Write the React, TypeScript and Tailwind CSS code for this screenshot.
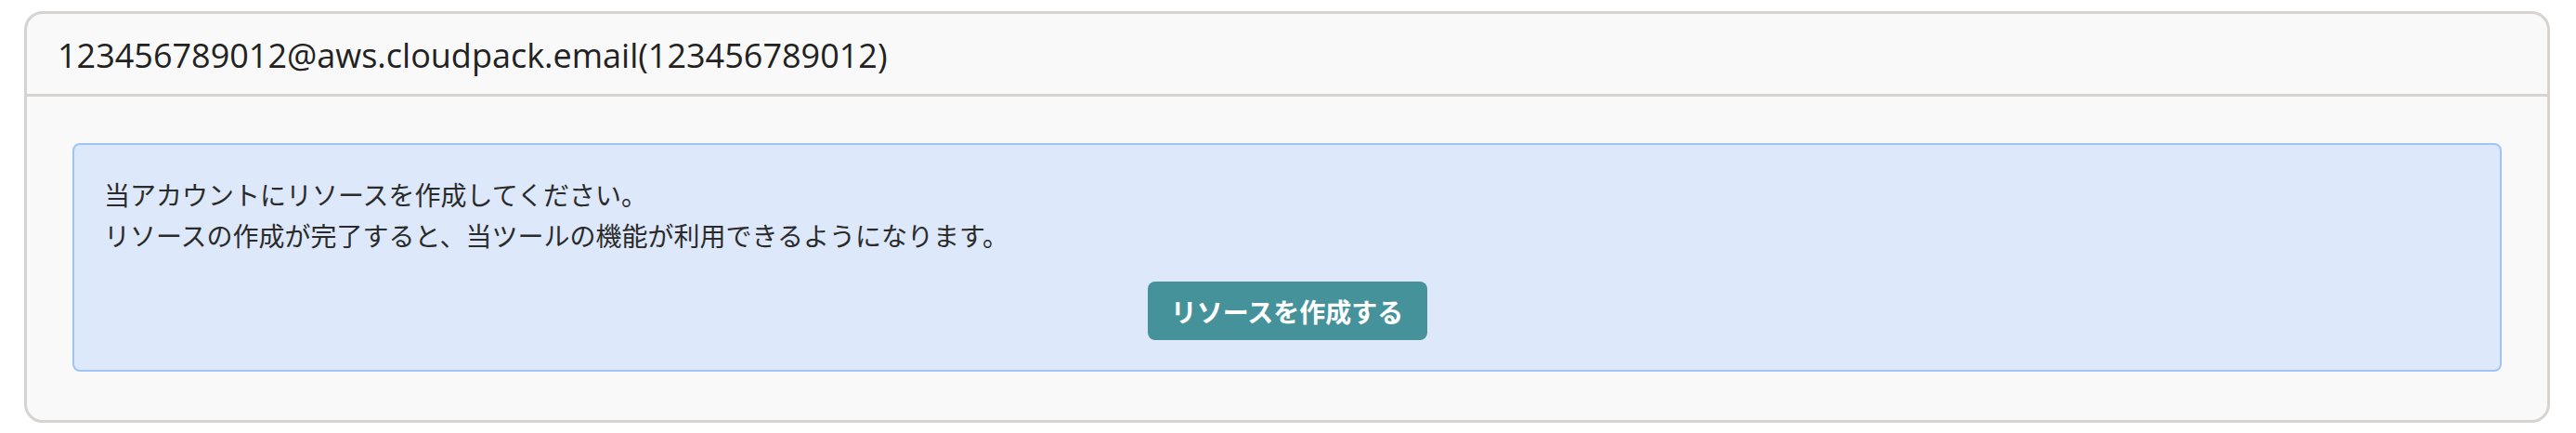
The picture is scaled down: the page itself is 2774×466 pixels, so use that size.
import React from "react";

export default function App() {
  return (
    <div
      className="w-[2774px] h-[466px] bg-white pt-[12px] pl-[26px]"
      style={{ fontFamily: "'Open Sans','Noto Sans CJK JP',sans-serif" }}
    >
      <div className="w-[2720px] h-[443px] rounded-[20px] border-[3px] border-[#d6d3d0] bg-[#f9f9f9] overflow-hidden flex flex-col">
        <div className="h-[89px] px-[33px] py-[20px] border-b-[3px] border-[#d6d3d0]">
          <div className="text-[36px] leading-[49px] text-[#222]">
            123456789012@aws.cloudpack.email(123456789012)
          </div>
        </div>
        <div className="px-[49px] pt-[50px]">
          <div className="h-[246px] rounded-[8px] border-2 border-[#9ec5f5] bg-[#dde8fa] px-[32px] pt-[31px]">
            <div
              className="text-[28px] leading-[44px] text-[#2b2b2b]"
              style={{ fontFamily: "'Noto Sans CJK JP',sans-serif" }}
            >
              <p>当アカウントにリソースを作成してください。</p>
              <p>リソースの作成が完了すると、当ツールの機能が利用できるようになります。</p>
            </div>
            <div className="flex justify-center mt-[28px]">
              <button
                className="h-[63px] w-[301px] rounded-[8px] bg-[#45929a] text-white text-[28px] font-bold flex items-center justify-center"
                style={{ fontFamily: "'Noto Sans CJK JP',sans-serif" }}
              >
                リソースを作成する
              </button>
            </div>
          </div>
        </div>
      </div>
    </div>
  );
}
